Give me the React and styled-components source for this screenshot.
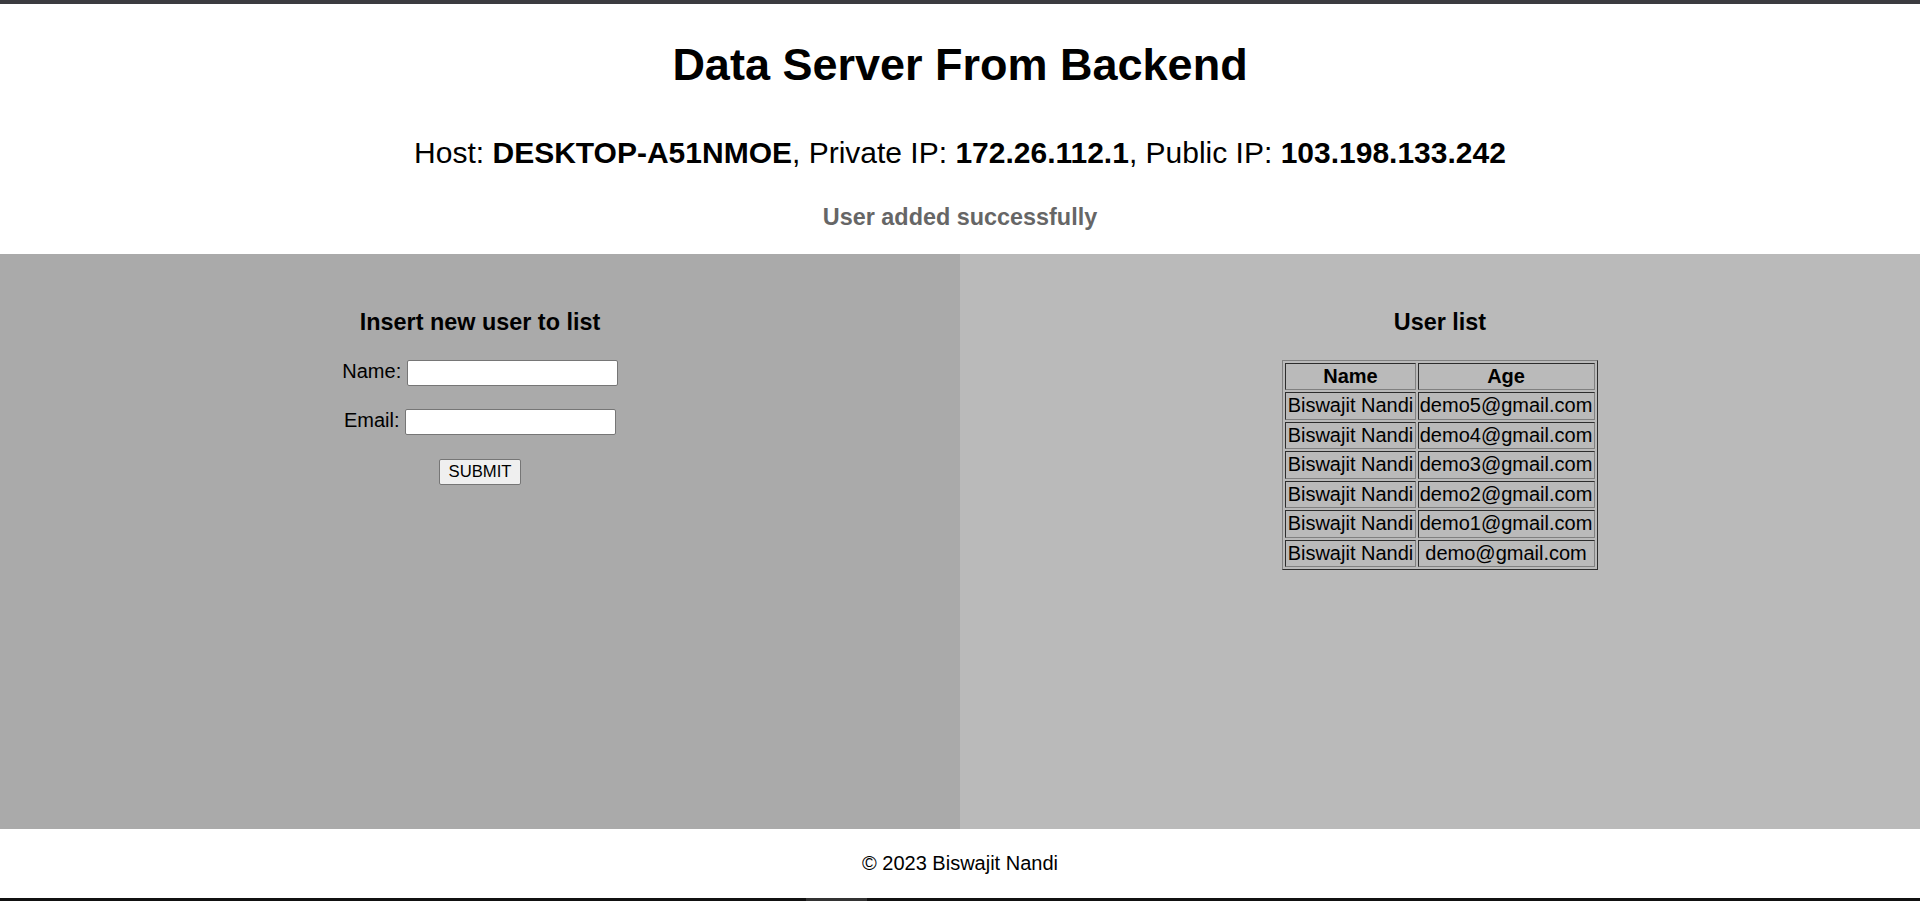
import React from "react";
import styled, { createGlobalStyle } from "styled-components";

const GlobalStyle = createGlobalStyle`
  html, body {
    margin: 0;
    padding: 0;
    background: #ffffff;
    overflow: hidden;
  }
  body {
    font-family: "Liberation Sans", Arial, Helvetica, sans-serif;
    color: #000;
    font-size: 20px;
  }
  * { box-sizing: border-box; }
`;

const Page = styled.div`
  display: flex;
  flex-direction: column;
  height: 901px;
  width: 1920px;
`;

const EdgeBar = styled.div`
  height: ${(p) => p.$h || 3}px;
  flex: none;
  background: ${(p) => p.$bg};
`;

const Header = styled.header`
  flex: none;
  height: 250px;
  display: flex;
  flex-direction: column;
  align-items: center;
  text-align: center;
`;

const Title = styled.h1`
  margin: 35px 0 45px;
  font-size: 45px;
  line-height: 52px;
  font-weight: bold;
`;

const HostLine = styled.h2`
  margin: 0 0 34px;
  font-size: 30px;
  line-height: 34px;
  font-weight: normal;

  b {
    font-weight: bold;
  }
`;

const Status = styled.h3`
  margin: 0;
  font-size: 23.4px;
  line-height: 27px;
  font-weight: bold;
  color: #666666;
`;

const Main = styled.main`
  flex: 1;
  display: grid;
  grid-template-columns: 1fr 1fr;
`;

const Panel = styled.section`
  background: ${(p) => p.$bg};
  padding-top: 55px;
  display: flex;
  flex-direction: column;
  align-items: center;
`;

const PanelTitle = styled.h3`
  margin: 0 0 23.5px;
  font-size: 23.4px;
  line-height: 27px;
  font-weight: bold;
`;

const Form = styled.form`
  display: flex;
  flex-direction: column;
  align-items: center;
  gap: 23.5px;
`;

const Row = styled.div`
  display: flex;
  justify-content: center;
  align-items: baseline;
  gap: 5.5px;
`;

const Label = styled.label`
  font-size: 20px;
  line-height: 23px;
`;

const TextInput = styled.input`
  width: 211px;
  height: 26px;
  padding: 1px 2.5px;
  border: 1px solid #767676;
  border-radius: 2px;
  background: #ffffff;
  font-family: "Liberation Sans", Arial, sans-serif;
  font-size: 16.67px;
`;

const Button = styled.button`
  width: 82px;
  height: 26px;
  padding: 1px 7px;
  border: 1px solid #767676;
  border-radius: 2px;
  background: #efefef;
  color: #000;
  font-family: "Liberation Sans", Arial, sans-serif;
  font-size: 16.67px;
  line-height: 19px;
`;

const Table = styled.table`
  border: 1px outset grey;
  border-spacing: 2px;
  font-size: 20px;
  line-height: 23px;
`;

const Th = styled.th`
  border: 1px inset grey;
  padding: 1.25px;
  font-weight: bold;
  text-align: center;
`;

const Td = styled.td`
  border: 1px inset grey;
  padding: 1.25px;
  text-align: center;
  white-space: nowrap;
`;

const Footer = styled.footer`
  flex: none;
  height: 69px;
  display: flex;
  align-items: center;
  justify-content: center;
  font-size: 20px;
  line-height: 23px;
  background: #ffffff;
`;

const users = [
  { name: "Biswajit Nandi", email: "demo5@gmail.com" },
  { name: "Biswajit Nandi", email: "demo4@gmail.com" },
  { name: "Biswajit Nandi", email: "demo3@gmail.com" },
  { name: "Biswajit Nandi", email: "demo2@gmail.com" },
  { name: "Biswajit Nandi", email: "demo1@gmail.com" },
  { name: "Biswajit Nandi", email: "demo@gmail.com" },
];

export default function App() {
  return (
    <>
      <GlobalStyle />
      <Page>
        <EdgeBar $h={4} $bg="#3b3b40" />
        <Header>
          <Title>Data Server From Backend</Title>
          <HostLine>
            Host: <b>DESKTOP-A51NMOE</b>, Private IP: <b>172.26.112.1</b>, Public IP:{" "}
            <b>103.198.133.242</b>
          </HostLine>
          <Status>User added successfully</Status>
        </Header>
        <Main>
          <Panel $bg="#aaaaaa">
            <PanelTitle>Insert new user to list</PanelTitle>
            <Form onSubmit={(e) => e.preventDefault()}>
              <Row>
                <Label htmlFor="name">Name:</Label>
                <TextInput id="name" type="text" />
              </Row>
              <Row>
                <Label htmlFor="email">Email:</Label>
                <TextInput id="email" type="text" />
              </Row>
              <Row>
                <Button type="submit">SUBMIT</Button>
              </Row>
            </Form>
          </Panel>
          <Panel $bg="#bababa">
            <PanelTitle>User list</PanelTitle>
            <Table>
              <thead>
                <tr>
                  <Th>Name</Th>
                  <Th>Age</Th>
                </tr>
              </thead>
              <tbody>
                {users.map((u) => (
                  <tr key={u.email}>
                    <Td>{u.name}</Td>
                    <Td>{u.email}</Td>
                  </tr>
                ))}
              </tbody>
            </Table>
          </Panel>
        </Main>
        <Footer>© 2023 Biswajit Nandi</Footer>
        <EdgeBar $h={3} $bg="linear-gradient(to right, #111111 806px, #333333 806px, #333333 867px, #111111 867px)" />
      </Page>
    </>
  );
}
